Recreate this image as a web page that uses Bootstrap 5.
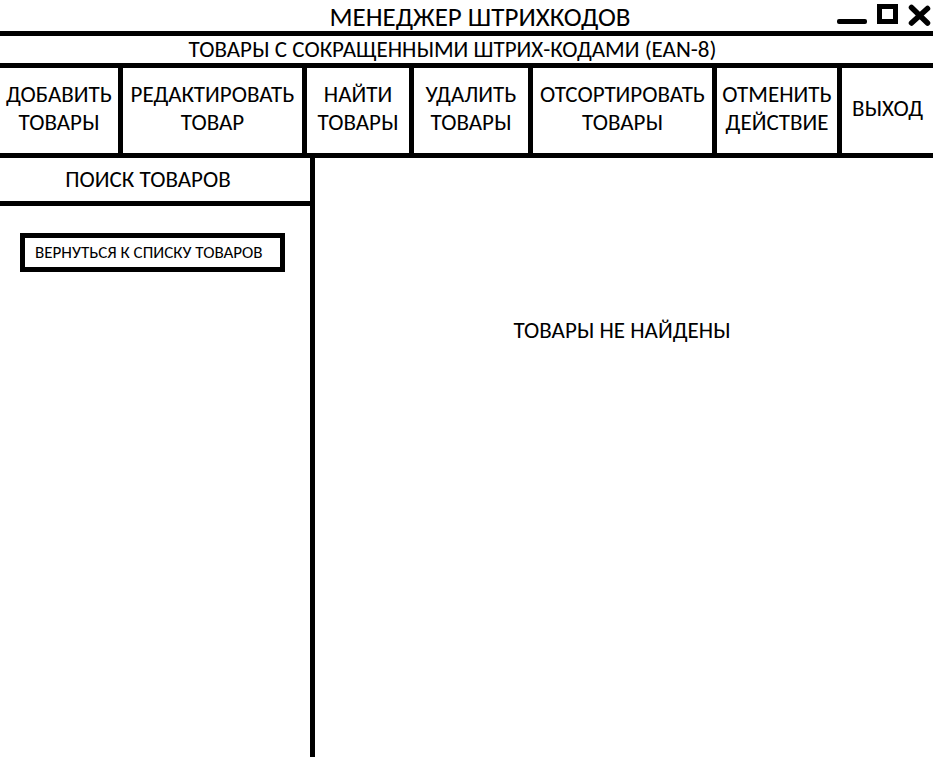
<!DOCTYPE html>
<html lang="ru">
<head>
<meta charset="utf-8">
<meta name="viewport" content="width=device-width, initial-scale=1">
<title>Менеджер штрихкодов</title>
<link href="https://cdn.jsdelivr.net/npm/bootstrap@5.3.0/dist/css/bootstrap.min.css" rel="stylesheet">
<style>
  body { font-family: Calibri, Carlito, "Noto Sans", sans-serif; font-size: 23px; line-height: 28px; color: #000; background: #fff; }
  .rule-b { border-bottom: 5px solid #000; }
  .rule-r { border-right: 5px solid #000; }
  .titlebar { height: 36px; }
  .titlebar h1 { font-size: 27px; line-height: 34px; padding-left: 127px; font-weight: 400; }
  .win-btn { width: 32px; height: 31px; }
  .win-btn.wide { width: 36px; }
  .subtitle { line-height: 27px; padding-right: 28px; }
  .toolbar { display: grid; grid-template-columns: 123fr 184fr 107fr 119fr 184fr 125fr 91fr; }
  .tool { height: 85px; padding: 0 0 6px; color: #000; background: #fff; border: 0; white-space: nowrap; }
  .tool:hover, .win-btn:hover { background: #eee; }
  .tool.rule-r { border-right: 5px solid #000; }
  .side { flex: 0 0 315px; }
  .side h2 { font-size: 23px; line-height: 43px; padding-right: 14px; font-weight: 400; }
  .back-btn { margin: 27px 25px 0 20px; border: 5px solid #000; background: #fff; color: #000; font-size: 17px; line-height: 29px; padding: 0 10px; white-space: nowrap; }
  .message { padding-top: 158px; padding-right: 4px; }
</style>
</head>
<body>
<div class="d-flex flex-column min-vh-100">
  <header>
    <div class="titlebar rule-b d-flex">
      <h1 class="flex-grow-1 text-center m-0">МЕНЕДЖЕР ШТРИХКОДОВ</h1>
      <div class="d-flex flex-shrink-0">
        <button type="button" class="win-btn wide border-0 p-0 bg-transparent d-flex" aria-label="Свернуть">
          <svg width="36" height="31" viewBox="0 0 36 31"><rect x="4" y="19" width="30" height="5" rx="2"/></svg>
        </button>
        <button type="button" class="win-btn border-0 p-0 bg-transparent d-flex" aria-label="Развернуть">
          <svg width="32" height="31" viewBox="0 0 32 31"><path d="M10.500 6.500h16v15h-16z" fill="none" stroke="#000" stroke-width="5"/></svg>
        </button>
        <button type="button" class="win-btn border-0 p-0 bg-transparent d-flex" aria-label="Закрыть">
          <svg width="32" height="31" viewBox="0 0 32 31"><path d="M10.500 7.500l16 15.500M26.500 8.500L10.500 23" stroke="#000" stroke-width="5.500" stroke-linecap="round"/></svg>
        </button>
      </div>
    </div>
    <p class="subtitle rule-b text-center m-0">ТОВАРЫ С СОКРАЩЕННЫМИ ШТРИХ-КОДАМИ (EAN-8)</p>
    <nav class="toolbar rule-b" aria-label="Действия">
      <button type="button" class="tool rule-r">ДОБАВИТЬ<br>ТОВАРЫ</button>
      <button type="button" class="tool rule-r">РЕДАКТИРОВАТЬ<br>ТОВАР</button>
      <button type="button" class="tool rule-r">НАЙТИ<br>ТОВАРЫ</button>
      <button type="button" class="tool rule-r">УДАЛИТЬ<br>ТОВАРЫ</button>
      <button type="button" class="tool rule-r">ОТСОРТИРОВАТЬ<br>ТОВАРЫ</button>
      <button type="button" class="tool rule-r">ОТМЕНИТЬ<br>ДЕЙСТВИЕ</button>
      <button type="button" class="tool">ВЫХОД</button>
    </nav>
  </header>
  <div class="d-flex flex-grow-1">
    <aside class="side rule-r d-flex flex-column">
      <h2 class="rule-b text-center m-0">ПОИСК ТОВАРОВ</h2>
      <button type="button" class="back-btn text-start">ВЕРНУТЬСЯ К СПИСКУ ТОВАРОВ</button>
    </aside>
    <main class="flex-grow-1 text-center">
      <p class="message m-0">ТОВАРЫ НЕ НАЙДЕНЫ</p>
    </main>
  </div>
</div>
<script src="https://cdn.jsdelivr.net/npm/bootstrap@5.3.0/dist/js/bootstrap.bundle.min.js"></script>
</body>
</html>
